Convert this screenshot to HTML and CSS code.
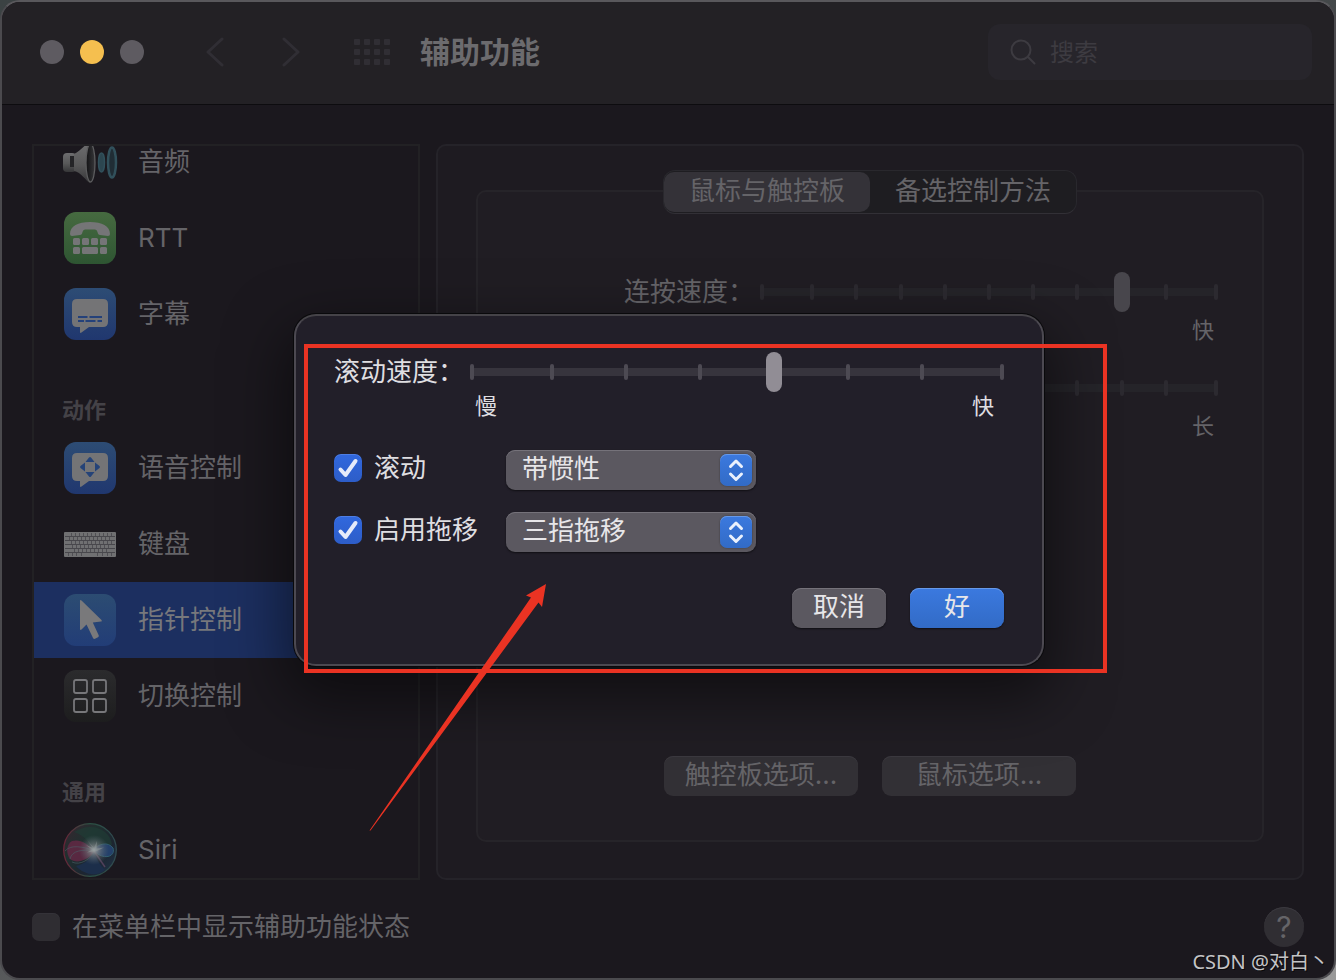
FILE: index.html
```html
<!DOCTYPE html>
<html lang="zh-CN">
<head>
<meta charset="utf-8">
<meta name="viewport" content="width=device-width, initial-scale=1">
<title>辅助功能</title>
<link rel="stylesheet" href="styles.css">
</head>
<body>
<div class="window">
  <header class="toolbar">
    <div class="lights">
      <button class="light" type="button"></button>
      <button class="light light-min" type="button"></button>
      <button class="light" type="button"></button>
    </div>
    <nav class="history">
      <button class="icon-btn" type="button"><svg width="18" height="30" viewBox="0 0 18 30"><path d="M16 2 2 15 16 28"/></svg></button>
      <button class="icon-btn" type="button"><svg width="18" height="30" viewBox="0 0 18 30"><path d="M2 2 16 15 2 28"/></svg></button>
    </nav>
    <button class="icon-btn grid-btn" type="button">
      <svg width="36" height="26" viewBox="0 0 36 26"><defs><pattern id="dots" width="10" height="10" patternUnits="userSpaceOnUse"><rect width="6" height="6" rx="1" fill="#302e34"/></pattern></defs><rect width="36" height="26" fill="url(#dots)"/></svg>
    </button>
    <h1 class="title">辅助功能</h1>
    <label class="search">
      <svg width="26" height="26" viewBox="0 0 26 26"><circle cx="11" cy="11" r="9.5"/><path d="M18 18 24.500 24.500"/></svg>
      <input type="search" placeholder="搜索">
    </label>
  </header>

  <main class="content">
    <nav class="sidebar">
      <ul class="list">
        <li><a class="row" href="#audio">
          <svg class="icon icon-wide" viewBox="0 0 56 54"><defs><linearGradient id="metal" x1="0" y1="0" x2="0" y2="1"><stop offset="0" stop-color="#6d6d6f"/><stop offset=".55" stop-color="#585859"/><stop offset="1" stop-color="#363638"/></linearGradient><linearGradient id="horn" x1="0" y1="0" x2="1" y2="0"><stop offset="0" stop-color="#121214"/><stop offset="1" stop-color="#37373a"/></linearGradient></defs><g transform="translate(1 1)"><rect y="17" width="13" height="19" rx="4" fill="url(#metal)"/><path d="M7 20h5v11H7z" fill="#242427"/><path d="M11 18C16 16 21 10 25 7L29 8 27 47C23 45 18 36 11 35Z" fill="url(#metal)"/><ellipse cx="27.500" cy="27" rx="4.500" ry="19" fill="url(#horn)" stroke="#5c5c5e" stroke-width="1.300"/><ellipse cx="38.500" cy="26.500" rx="3" ry="9.500" fill="#2c4650" stroke="#31505b" stroke-width="1.500"/><ellipse cx="49" cy="26.500" rx="4" ry="15" fill="#202d35" stroke="#31505b" stroke-width="2.500"/></g></svg>
          <span>音频</span></a></li>
        <li><a class="row" href="#rtt">
          <svg class="icon" viewBox="0 0 52 52"><defs><linearGradient id="green" x1="0" y1="0" x2="0" y2="1"><stop offset="0" stop-color="#466a40"/><stop offset="1" stop-color="#2e5532"/></linearGradient></defs><rect width="52" height="52" rx="12" fill="url(#green)"/><g fill="#757577"><path d="M6 22C6 14 14 10 26 10S46 14 46 22Q46 24 44 24L36 23Q34 23 33.500 20 33 17.500 31 17.500H21Q19 17.500 18.500 20 18 23 16 23L8 24Q6 24 6 22Z"/><rect x="9" y="26" width="7" height="7" rx="1.500"/><rect x="18" y="26" width="7" height="7" rx="1.500"/><rect x="27" y="26" width="7" height="7" rx="1.500"/><rect x="36" y="26" width="7" height="7" rx="1.500"/><rect x="9" y="35" width="7" height="7" rx="1.500"/><rect x="18" y="35" width="16" height="7" rx="1.500"/><rect x="36" y="35" width="7" height="7" rx="1.500"/></g></svg>
          <span>RTT</span></a></li>
        <li><a class="row" href="#captions">
          <svg class="icon" viewBox="0 0 52 52"><defs><linearGradient id="blue" x1="0" y1="0" x2="0" y2="1"><stop offset="0" stop-color="#2d4c74"/><stop offset="1" stop-color="#20376f"/></linearGradient></defs><rect width="52" height="52" rx="12" fill="url(#blue)"/><path d="M13 11H39Q44 11 44 16V34Q44 39 39 39H25L17.500 44.500Q16 45.500 16 44V39H13Q8 39 8 34V16Q8 11 13 11Z" fill="#747476"/><path d="M14 29h9.500M25.500 29H38M14 33h6M21.500 33H31.500M33.500 33H38" stroke="#24417a" stroke-width="2"/></svg>
          <span>字幕</span></a></li>
      </ul>
      <h2 class="group-title">动作</h2>
      <ul class="list">
        <li><a class="row" href="#voice">
          <svg class="icon" viewBox="0 0 52 52"><rect width="52" height="52" rx="12" fill="url(#blue)"/><path d="M13 11H39Q44 11 44 16V34Q44 39 39 39H25L17.500 44.500Q16 45.500 16 44V39H13Q8 39 8 34V16Q8 11 13 11Z" fill="#747476"/><path d="M25 15.500Q26 14.500 27 15.500L30.500 20H21.500ZM25 34.500Q26 35.500 27 34.500L30.500 30H21.500ZM16.500 24Q15.500 25 16.500 26L21 29.500V20.500ZM35.500 24Q36.500 25 35.500 26L31 29.500V20.500Z" fill="#254378"/></svg>
          <span>语音控制</span></a></li>
        <li><a class="row" href="#keyboard">
          <svg class="icon" viewBox="0 0 52 52"><rect y="14" width="52" height="25" rx="1" fill="#707072"/><path d="M1 18.500h50M1 22.500h50M1 26.500h50M1 30.500h50M1 34.500h50" stroke="#48474c" stroke-width="1"/><path d="M7.500 15v3M11.500 15v3M15.500 15v3M19.500 15v3M23.500 15v3M27.500 15v3M31.500 15v3M35.500 15v3M39.500 15v3M43.500 15v3M47.500 15v3M5.500 19v3M9.500 19v3M13.500 19v3M17.500 19v3M21.500 19v3M25.500 19v3M29.500 19v3M33.500 19v3M37.500 19v3M41.500 19v3M45.500 19v3M7.500 23v3M11.500 23v3M15.500 23v3M19.500 23v3M23.500 23v3M27.500 23v3M31.500 23v3M35.500 23v3M39.500 23v3M43.500 23v3M47.500 23v3M8.500 27v3M12.500 27v3M16.500 27v3M20.500 27v3M24.500 27v3M28.500 27v3M32.500 27v3M36.500 27v3M40.500 27v3M44.500 27v3M10.500 31v3M14.500 31v3M18.500 31v3M22.500 31v3M26.500 31v3M30.500 31v3M34.500 31v3M38.500 31v3M42.500 31v3M4.500 35v3M8.500 35v3M12.500 35v3M17.500 35v3M33.500 35v3M38.500 35v3M43.500 35v3M47.500 35v3" stroke="#504f54" stroke-width="1"/></svg>
          <span>键盘</span></a></li>
        <li><a class="row row-current" href="#pointer" aria-current="page">
          <svg class="icon" viewBox="0 0 52 52"><defs><linearGradient id="sky" x1="0" y1="0" x2="0" y2="1"><stop offset="0" stop-color="#2c4c72"/><stop offset="1" stop-color="#223d77"/></linearGradient></defs><rect width="52" height="52" rx="12" fill="url(#sky)"/><path d="M16 7Q16 5.500 17.500 6.500L37.500 26Q38.500 27.500 37 27.500L28.800 28.600 34.800 41.500Q35 42.800 34 43.200L31 44.800Q29.700 45.300 29 44L22.500 30.500 17.500 35.500Q16 36.500 16 35Z" fill="#79797b"/></svg>
          <span>指针控制</span></a></li>
        <li><a class="row" href="#switch">
          <svg class="icon" viewBox="0 0 52 52"><defs><linearGradient id="coal" x1="0" y1="0" x2="0" y2="1"><stop offset="0" stop-color="#2b2b2d"/><stop offset="1" stop-color="#1d1d1e"/></linearGradient></defs><rect width="52" height="52" rx="12" fill="url(#coal)"/><g fill="none" stroke="#77777a" stroke-width="1.800"><rect x="10" y="10" width="13" height="13" rx="2"/><rect x="29" y="10" width="13" height="13" rx="2"/><rect x="10" y="29" width="13" height="13" rx="2"/><rect x="29" y="29" width="13" height="13" rx="2"/></g></svg>
          <span>切换控制</span></a></li>
      </ul>
      <h2 class="group-title">通用</h2>
      <ul class="list">
        <li><a class="row" href="#siri">
          <svg class="icon icon-wide" viewBox="0 0 56 54"><defs><radialGradient id="glow"><stop offset="0" stop-color="#a0a5a6"/><stop offset=".35" stop-color="#777d80" stop-opacity=".7"/><stop offset="1" stop-color="#506068" stop-opacity="0"/></radialGradient><linearGradient id="orb" x1="0" y1="0" x2="1" y2="1"><stop offset="0" stop-color="#3a2430"/><stop offset=".35" stop-color="#20302f"/><stop offset=".65" stop-color="#1d2530"/><stop offset="1" stop-color="#1f344a"/></linearGradient><linearGradient id="rim" x1="0" y1="0" x2="1" y2="0"><stop offset="0" stop-color="#6a2438"/><stop offset=".5" stop-color="#2b5143"/><stop offset="1" stop-color="#304a50"/></linearGradient></defs><circle cx="28" cy="27" r="26.300" fill="url(#orb)" stroke="url(#rim)" stroke-width="1.300"/><path d="M28 4C39 4 49 11 50 22 43 21 36 24 32 28 31 22 22 12 12 9 17 6 22 4 28 4Z" fill="#203c34" opacity=".7"/><path d="M32 29C25 19 17 16 10 18 4 21 4 31 8 36 14 41 25 38 32 29Z" fill="#632844" opacity=".85"/><path d="M3 28C9 21 20 24 32 27 20 27 10 27 8 36M10 39C18 43 29 36 33 28" stroke="#4a5f68" fill="none" opacity=".6"/><path d="M31 27C36 21 46 18 51 25 54 34 41 38 31 27Z" fill="#24406a" stroke="#305e70" stroke-width="1"/><path d="M14 43C23 41 29 35 32 28 34 36 39 43 43 47 35 54 22 52 14 43Z" fill="#1c2e4a"/><path d="M32 28 43 44" stroke="#51405a" stroke-width="1.500"/><circle cx="32" cy="27" r="15" fill="url(#glow)"/><path d="M25 17 32 25 35 18 34.500 25.500 42 24.500 35 28 25 29.500 30 26.500 24 22 31 25Z" fill="#929b9b" opacity=".5"/></svg>
          <span>Siri</span></a></li>
      </ul>
    </nav>

    <section class="panel">
      <div class="tabs">
        <button class="tab tab-on" type="button" aria-pressed="true">鼠标与触控板</button>
        <button class="tab" type="button" aria-pressed="false">备选控制方法</button>
      </div>
      <div class="group">
        <div class="field">
          <label class="field-label" for="dbl">连按速度：</label>
          <div class="slider dim">
            <span class="ticks"><i></i><i></i><i></i><i></i><i></i><i></i><i></i><i></i><i></i><i></i><i></i></span>
            <input id="dbl" type="range" min="0" max="10" value="8">
          </div>
        </div>
        <div class="caption">快</div>
        <div class="field">
          <div class="slider dim">
            <span class="ticks"><i></i><i></i><i></i><i></i><i></i><i></i><i></i><i></i><i></i><i></i><i></i></span>
            <input id="delay" type="range" min="0" max="10" value="4">
          </div>
        </div>
        <label class="caption" for="delay">长</label>
        <div class="options">
          <button class="btn btn-dim" type="button">触控板选项...</button>
          <button class="btn btn-dim" type="button">鼠标选项...</button>
        </div>
      </div>
    </section>
  </main>

  <footer class="footer">
    <label class="check-row"><input class="check check-dim" type="checkbox"><span>在菜单栏中显示辅助功能状态</span></label>
    <button class="help" type="button">?</button>
  </footer>

  <div class="overlay">
    <form class="dialog" role="dialog">
      <div class="field">
        <label class="field-label" for="scroll-speed">滚动速度：</label>
        <div class="slider">
          <span class="ticks"><i></i><i></i><i></i><i></i><i></i><i></i><i></i><i></i></span>
          <input id="scroll-speed" type="range" min="0" max="7" value="4">
        </div>
      </div>
      <div class="ends"><span>慢</span><span>快</span></div>
      <div class="choices">
        <label class="check-row"><input class="check" type="checkbox" checked><span>滚动</span></label>
        <div class="popup">
          <select aria-label="滚动"><option>带惯性</option></select>
          <svg class="chip" viewBox="0 0 32 32"><path d="M10.500 12.500 16 7 21.500 12.500M10.500 20 16 25.500 21.500 20"/></svg>
        </div>
        <label class="check-row"><input class="check" type="checkbox" checked><span>启用拖移</span></label>
        <div class="popup">
          <select aria-label="启用拖移"><option>三指拖移</option></select>
          <svg class="chip" viewBox="0 0 32 32"><path d="M10.500 12.500 16 7 21.500 12.500M10.500 20 16 25.500 21.500 20"/></svg>
        </div>
      </div>
      <div class="actions">
        <button class="btn" type="button">取消</button>
        <button class="btn btn-primary" type="button">好</button>
      </div>
    </form>
  </div>

  <svg class="markup" viewBox="0 0 1336 980"><rect x="306" y="346" width="799" height="325" fill="none" stroke="#ea3323" stroke-width="4"/><path d="M369.500 830.500 531 597.500 526 595.500 546 584 542 607 538.500 602.500 370.500 830.500Z" fill="#ea3323"/></svg>
  <div class="watermark">CSDN @对白丶</div>
</div>
</body>
</html>
```
FILE: styles.css
```css
* { box-sizing: border-box; }

body {
  margin: 0;
  background: linear-gradient(160deg, #3b4243, #4a4c4e 60%, #9a9a9a);
  color: #656468;
  font-family: Inter, "Noto Sans CJK SC", sans-serif;
  font-size: 26px;
  line-height: 36px;
}

button, input, select {
  font: inherit;
  color: inherit;
  margin: 0;
}

button {
  border: 0;
  padding: 0;
  background: none;
}

.window {
  position: relative;
  display: flex;
  flex-direction: column;
  height: 100vh;
  min-height: 800px;
  overflow: hidden;
  border: 2px solid #4b4a4e;
  border-top-color: #59585c;
  border-radius: 20px;
  background: #1b181e;
}

/* Toolbar */
.toolbar {
  display: flex;
  flex: none;
  align-items: center;
  height: 103px;
  padding: 0 22px 2px 38px;
  border-bottom: 1px solid #0d0c0f;
  background: #232125;
}

.lights { display: flex; gap: 16px; }

.light {
  width: 24px;
  height: 24px;
  border-radius: 50%;
  background: #5e5b61;
}

.light-min { background: #f5bf4f; }

.history {
  display: flex;
  gap: 58px;
  margin-left: 62px;
}

.icon-btn {
  display: flex;
  fill: none;
  stroke: #302e34;
  stroke-width: 3;
  stroke-linecap: round;
  stroke-linejoin: round;
}

.grid-btn { margin-left: 54px; stroke: none; }

.title {
  margin: 0 0 0 30px;
  color: #6c6b6e;
  font-size: 30px;
  font-weight: 700;
}

.search {
  display: flex;
  align-items: center;
  gap: 14px;
  width: 324px;
  height: 56px;
  margin-left: auto;
  padding: 0 22px;
  border-radius: 12px;
  background: #27252b;
  fill: none;
  stroke: #3d3b41;
  stroke-width: 2;
  stroke-linecap: round;
}

.search svg { flex: none; }

.search input {
  width: 100%;
  min-width: 0;
  padding: 2px 0 0;
  border: 0;
  outline: 0;
  background: none;
  font-size: 24px;
}

.search input::placeholder { color: #3d3b41; opacity: 1; }

/* Content */
.content {
  display: flex;
  flex: 1;
  gap: 16px;
  min-height: 0;
  padding: 39px 30px 0;
}

.sidebar {
  flex: none;
  width: 388px;
  overflow: hidden;
  border: 2px solid #222124;
}

.list {
  margin: 0;
  padding: 0;
  list-style: none;
}

/* The list rests part-way scrolled */
.list:first-child { margin-top: -22px; }

.row {
  display: flex;
  align-items: center;
  gap: 22px;
  height: 76px;
  padding: 0 30px;
  color: inherit;
  text-decoration: none;
}

.row-current {
  background: #1c2f60;
  color: #77787c;
}

.icon { flex: none; width: 52px; height: 52px; }
.icon-wide { width: 56px; height: 54px; margin: 0 -2px; }

.group-title {
  margin: 0;
  padding: 42px 28px 4px;
  color: #444247;
  font-size: 22px;
  font-weight: 700;
  line-height: 32px;
}

.panel {
  display: flex;
  flex: 1;
  flex-direction: column;
  align-items: center;
  min-width: 0;
  padding: 24px 38px 36px;
  border: 2px solid #252329;
  border-radius: 10px;
  background: #1e1b21;
}

.tabs {
  z-index: 1;
  display: flex;
  flex: none;
  height: 44px;
  border: 1px solid #29282d;
  border-bottom-color: #323036;
  border-radius: 12px;
  background: #1e1d21;
}

.tab {
  padding: 0 25px 3px;
  border-radius: 10px;
}

.tab-on {
  margin: 1px 0;
  background: #343238;
}

.group {
  display: flex;
  flex: 1;
  flex-direction: column;
  align-self: stretch;
  margin-top: -24px;
  padding: 80px 44px 44px;
  border: 2px solid #262429;
  border-radius: 10px;
  background: #201d23;
}

.field {
  display: flex;
  align-items: center;
  justify-content: flex-end;
  gap: 6px;
}

.field-label { flex: none; }

.caption {
  align-self: flex-end;
  margin: 4px 4px 24px 0;
  font-size: 22px;
  line-height: 28px;
}

/* Sliders */
.slider {
  position: relative;
  flex: 1;
  height: 40px;
  --track: #37343d;
  --tick: #4d4a53;
  --thumb: #918d95;
}

.dim {
  flex: none;
  width: 458px;
  --track: #252429;
  --tick: #2c2a30;
  --thumb: #48464c;
}

.ticks {
  position: absolute;
  inset: 12px 0;
  display: flex;
  justify-content: space-between;
  background: linear-gradient(var(--track), var(--track)) center / 100% 8px no-repeat;
}

.ticks i {
  width: 4px;
  border-radius: 2px;
  background: var(--tick);
}

.ticks i:first-child { margin-right: 6px; }
.ticks i:last-child { margin-left: 6px; }

.slider input {
  position: relative;
  display: block;
  width: 100%;
  height: 40px;
  background: none;
  appearance: none;
}

.slider input::-webkit-slider-thumb {
  width: 16px;
  height: 40px;
  border-radius: 8px;
  background: var(--thumb);
  appearance: none;
}

/* Buttons */
.btn {
  min-width: 94px;
  height: 40px;
  padding: 0 0 3px;
  border-radius: 9px;
  background: #5b5860;
  box-shadow: inset 0 1px #75727a, 0 1px 2px #0008;
  color: #e7e6e9;
}

.btn-primary {
  background: linear-gradient(#3b79df, #326bc6);
  box-shadow: inset 0 1px #6799e8, 0 1px 2px #0008;
}

.btn-dim {
  width: 194px;
  background: #323035;
  box-shadow: inset 0 1px #3b393f;
  color: #656468;
}

.options {
  display: flex;
  justify-content: center;
  gap: 24px;
  margin-top: auto;
}

/* Footer */
.footer {
  display: flex;
  flex: none;
  align-items: center;
  justify-content: space-between;
  height: 98px;
  padding: 0 30px 4px;
}

.check-row {
  display: flex;
  align-items: center;
  gap: 12px;
}

.check {
  flex: none;
  width: 28px;
  height: 28px;
  border-radius: 7px;
  background: #2f2d32;
  appearance: none;
}

.check-dim { box-shadow: inset 0 1px #343238; }

.check:checked {
  background:
    url("data:image/svg+xml,%3Csvg xmlns='http://www.w3.org/2000/svg' viewBox='0 0 28 28'%3E%3Cpath d='M6.500 15.500 11.500 21 21.500 7' fill='none' stroke='%23e6ebfa' stroke-width='4' stroke-linecap='round' stroke-linejoin='round'/%3E%3C/svg%3E"),
    linear-gradient(#3168de, #2d5dc8);
  box-shadow: inset 0 1px #4e7ee4;
}

.help {
  width: 40px;
  height: 40px;
  border-radius: 50%;
  background: #302e33;
  box-shadow: inset 0 1px #3b393f;
  font-size: 30px;
}

/* Dialog */
.overlay {
  position: absolute;
  inset: 0;
  z-index: 2;
  display: flex;
  align-items: center;
  justify-content: center;
  padding-left: 2px;
}

.dialog {
  width: 750px;
  padding: 36px 38px;
  border: 2px solid #4c4951;
  border-top-color: #454348;
  border-radius: 22px;
  background: #221f29;
  box-shadow: 0 0 0 1px #09090b, 0 24px 60px 8px rgba(0, 0, 0, .5);
  color: #dfdee1;
}

.ends {
  display: flex;
  justify-content: space-between;
  padding: 0 10px 0 141px;
  font-size: 22px;
  line-height: 28px;
}

.choices {
  display: grid;
  grid-template-columns: 172px 250px;
  gap: 22px 0;
  margin: 30px 0 36px;
}

.choices .check-row { padding-bottom: 4px; }

.popup { position: relative; }

.popup select {
  width: 100%;
  height: 40px;
  padding: 0 40px 3px 16px;
  border: 0;
  border-radius: 9px;
  background: #5b5860;
  box-shadow: inset 0 1px #75727a, 0 1px 2px #0008;
  color: #e7e6e9;
  appearance: none;
}

.chip {
  position: absolute;
  top: 4px;
  right: 4px;
  width: 32px;
  height: 32px;
  border-radius: 7px;
  background: linear-gradient(#3b79df, #326bc6);
  box-shadow: 0 0 2px #0006, inset 0 1px #6799e8;
  fill: none;
  stroke: #eaf1fd;
  stroke-width: 3;
  stroke-linecap: round;
  stroke-linejoin: round;
  pointer-events: none;
}

.actions {
  display: flex;
  justify-content: flex-end;
  gap: 24px;
}

/* Red highlight drawn over the window, and the site mark */
.markup {
  position: absolute;
  inset: -2px;
  z-index: 3;
  width: calc(100% + 4px);
  height: calc(100% + 4px);
  pointer-events: none;
}

.watermark {
  position: absolute;
  right: 5px;
  bottom: 2px;
  z-index: 3;
  color: #c4c4c6;
  font-family: "Noto Sans", "Noto Sans CJK SC", sans-serif;
  font-size: 20px;
  line-height: 28px;
  text-shadow: 1px 1px #000a;
}
```
